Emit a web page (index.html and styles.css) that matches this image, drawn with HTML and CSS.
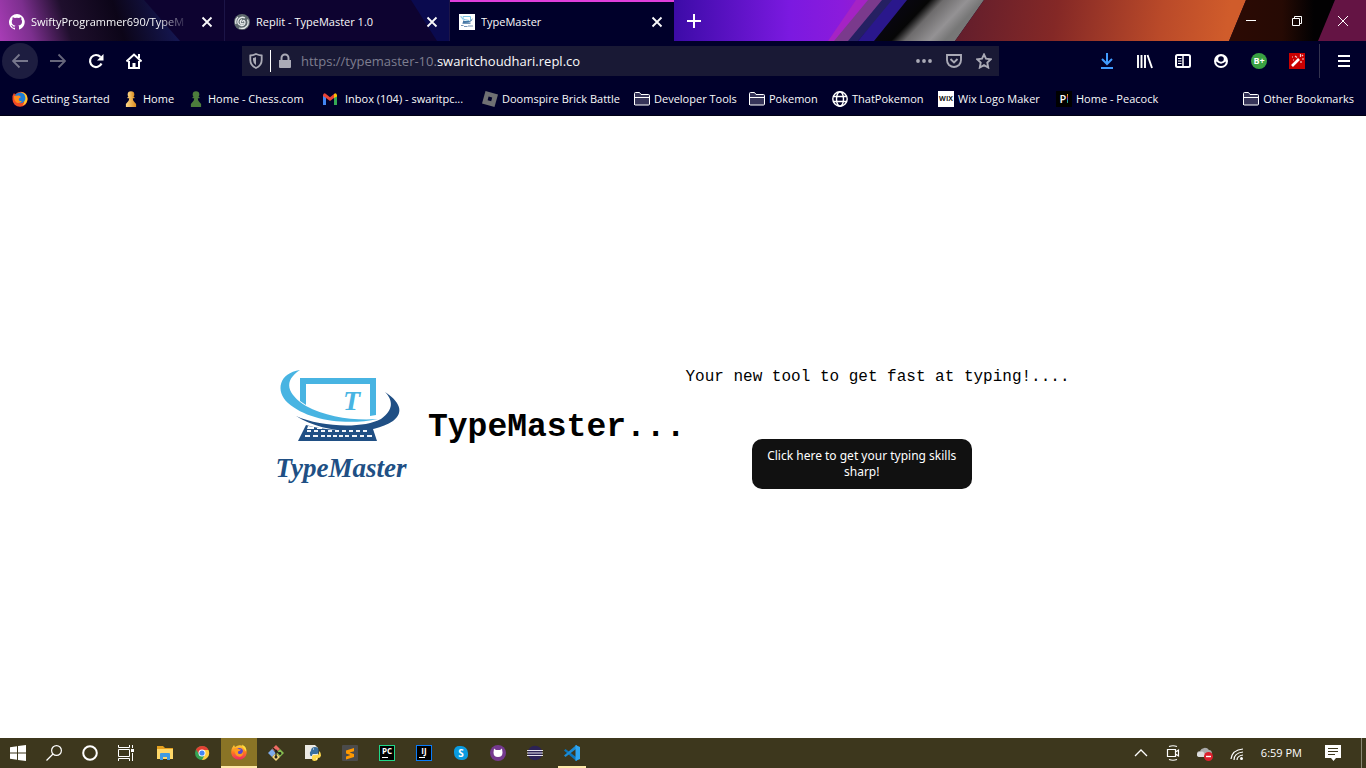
FILE: index.html
```html
<!DOCTYPE html>
<html lang="en">
<head>
<meta charset="utf-8">
<title>TypeMaster</title>
<link rel="stylesheet" href="styles.css">
</head>
<body>
<svg class="defs" aria-hidden="true">
  <defs>
    <linearGradient id="fire" x1="0" y1="0" x2="0" y2="1"><stop offset="0" stop-color="#ffd23a"/><stop offset=".5" stop-color="#ff7a1c"/><stop offset="1" stop-color="#f0246a"/></linearGradient>
    <linearGradient id="gold" x1="0" y1="0" x2="1" y2="0"><stop offset="0" stop-color="#ffd98a"/><stop offset="1" stop-color="#d98a1c"/></linearGradient>
  </defs>
  <symbol id="close" viewBox="0 0 16 16"><path d="M3.500 3.500l9 9m0-9l-9 9" fill="none" stroke="currentColor" stroke-width="1.800"/></symbol>
  <symbol id="folder" viewBox="0 0 16 16"><path d="M.5 14V2.500q0-1 1-1h4l1.500 2h7.500q1 0 1 1V13q0 1-1 1H1.500q-1 0-1-1z" fill="#363459" stroke="#fff"/><path d="M1 6.500h14.500" stroke="#fff"/></symbol>
  <symbol id="pawn" viewBox="0 0 16 16"><circle cx="8" cy="3.500" r="3.300"/><path d="M4.500 6h7v1.300H9.800c0 3 2 4 3.300 5.700V16H2.900v-3c1.300-1.700 3.300-2.700 3.300-5.700H4.500z"/></symbol>
  <symbol id="firefox" viewBox="0 0 16 16"><path d="M1 4l2-3 1 2q4-3 8-1l1 0q3 3 2.700 7a7.800 7.400 0 0 1-15.500 0Q0 6 1 4z" fill="url(#fire)"/><circle cx="8" cy="8" r="4.100" fill="#5a45cf"/><path d="M3 4.500q3-1.500 5 .7l2 .3q-.8 1.800-3 1.900-.5 2.500 2 2.700 2.800-.3 2.500-3.100 1.700 4-1.500 5.400Q3.500 14 3 4.500z" fill="#ff9b20"/><path d="M11 .5q.2 3 2.500 5l1.600 2Q16 3 11 .5z" fill="#ffdd3c"/></symbol>
  <symbol id="firefox-old" viewBox="0 0 16 16"><path d="M.5 5L2 2l1 1.500Q7-.8 12 1.500q4 2.500 3.500 7a7.500 7.300 0 0 1-15 0z" fill="#f04a24"/><path d="M9 1q6 .5 6.500 7-.5 5-5 6.500Q15 9 9 1z" fill="#ffca2c"/><path d="M4 3q4-3 8 0 2.500 4 .5 7-3 3.500-6.500 1.500Q1 8 4 3z" fill="#1f7fd8"/><path d="M2 5l5-.5L9 6 7 7.500q-1 3 3 2.500-2 3-5.500 1.500Q1.500 9 2 5z" fill="#ff8a1e"/></symbol>
</svg>

<header class="browser">
  <div class="tabstrip">
    <svg class="theme" viewBox="0 0 1366 41" preserveAspectRatio="none" aria-hidden="true">
      <defs>
        <linearGradient id="t1" gradientUnits="userSpaceOnUse" x1="0" y1="35" x2="160" y2="-15"><stop offset="0" stop-color="#a63cb4"/><stop offset=".18" stop-color="#7c2f8e"/><stop offset=".4" stop-color="#1f0f2d"/><stop offset=".7" stop-color="#0c0518"/><stop offset="1" stop-color="#14164f"/></linearGradient>
        <linearGradient id="t2"><stop offset="0" stop-color="#3c0ba7"/><stop offset=".55" stop-color="#7b19e0"/><stop offset=".8" stop-color="#8b1bdc"/><stop offset="1" stop-color="#9d1dc4"/></linearGradient>
        <linearGradient id="t3" gradientUnits="userSpaceOnUse" x1="965" y1="0" x2="1225" y2="41"><stop offset="0" stop-color="#641e2c"/><stop offset=".35" stop-color="#842826"/><stop offset=".75" stop-color="#ba4a29"/><stop offset="1" stop-color="#d05c2b"/></linearGradient>
        <linearGradient id="t4"><stop offset="0" stop-color="#2c0a04"/><stop offset=".5" stop-color="#260a04"/><stop offset=".8" stop-color="#020102"/></linearGradient>
        <linearGradient id="t5" gradientUnits="userSpaceOnUse" x1="907" y1="0" x2="947" y2="38"><stop offset="0" stop-color="#080610"/><stop offset=".3" stop-color="#060606"/><stop offset=".48" stop-color="#6d6b6c"/><stop offset=".8" stop-color="#949294"/><stop offset="1" stop-color="#777"/></linearGradient>
      </defs>
      <path d="M0 0h1366v41H0z" fill="#0d0330"/>
      <path d="M0 0h144l36 41H0z" fill="url(#t1)"/>
      <path d="M411 0h60v41h-34z" fill="#0a0a4e"/>
      <path d="M674 0h210l-36 41H674z" fill="url(#t2)"/>
      <path d="M856 0h14l-32 41h-10z" fill="#a523c4"/>
      <path d="M868 0h16l-34 41h-16z" fill="#7a3a8c"/>
      <path d="M882 0h12l-36 41h-10z" fill="#252062"/>
      <path d="M892 0h16l-33 41h-17z" fill="#2a178c"/>
      <path d="M907 0h77l-29 41h-81z" fill="url(#t5)"/>
      <path d="M984 0h262l-17 41H955z" fill="url(#t3)"/>
      <path d="M1246 0h89l-16 41h-90z" fill="url(#t4)"/>
      <path d="M1335 0h31v41h-48z" fill="#641444"/>
    </svg>
    <div class="tab">
      <svg class="icon" viewBox="0 0 16 16"><path fill="#fff" d="M8 0a8 8 0 0 0-2.500 15.600c.4.100.5-.2.500-.4v-1.500c-2 .4-2.600-.5-2.800-1-.1-.3-.5-1-.8-1.200-.3-.2-.7-.5 0-.5.600 0 1 .6 1.200.8.700 1.200 1.900.9 2.300.7.100-.5.300-.9.500-1.100-1.800-.2-3.600-.9-3.600-4 0-.8.300-1.600.8-2.100-.1-.2-.4-1 .1-2.100 0 0 .7-.2 2.200.8a7.500 7.500 0 0 1 4 0c1.500-1 2.200-.8 2.200-.8.500 1.100.2 1.900.1 2.100.5.600.8 1.300.8 2.100 0 3.100-1.900 3.700-3.600 4 .3.200.6.700.6 1.500v2.200c0 .2.100.5.500.4A8 8 0 0 0 8 0z"/></svg>
      <span class="tab-title faded">SwiftyProgrammer690/TypeM</span>
      <button class="tab-close" aria-label="Close tab"><svg class="icon"><use href="#close"/></svg></button>
    </div>
    <div class="tab">
      <svg class="icon" viewBox="0 0 16 16"><circle cx="8" cy="8" r="8" fill="#5d686c"/><path d="M8 8q2-3 3 0 0 4-4 3.500-4.500-1.500-2.500-6Q7 2 11 4M2 10q-1-5 2-7M5 14q5 1.500 8-2 2-3 .5-6.500M9.500 9Q8 11 6.500 9q-1-2 1.500-3.500" fill="none" stroke="#e6eaeb" stroke-width="1.300"/></svg>
      <span class="tab-title">Replit - TypeMaster 1.0</span>
      <button class="tab-close" aria-label="Close tab"><svg class="icon"><use href="#close"/></svg></button>
    </div>
    <div class="tab active">
      <svg class="icon" viewBox="0 0 16 16"><path d="M0 0h16v16H0z" fill="#fff"/><path d="M4 5.500V2.500h7.500V6M2 2q-1 3 8 4.500" fill="none" stroke="#7cc3e4"/><path d="M4 6.500q8 2 9.500-2.500.5 5-9.500 4.500zM3.500 8.500h8v1.200h-8z" fill="#4576a4"/><path d="M2 11.500h2.500M5 12.500h3.500M9 12h5" stroke="#7793b5"/></svg>
      <span class="tab-title">TypeMaster</span>
      <button class="tab-close" aria-label="Close tab"><svg class="icon"><use href="#close"/></svg></button>
    </div>
    <button class="new-tab" aria-label="New tab"><svg class="icon" viewBox="0 0 16 16"><path d="M8 1v14M1 8h14" stroke="#fff" stroke-width="2"/></svg></button>
    <div class="window-buttons">
      <button aria-label="Minimize"><svg class="icon" viewBox="0 0 16 16"><path d="M3 7.500h10" stroke="#fff"/></svg></button>
      <button aria-label="Restore"><svg class="icon" viewBox="0 0 16 16"><path d="M3.500 5.500h7v7h-7zM5.500 5V3.500h7v7H11" fill="none" stroke="#fff"/></svg></button>
      <button aria-label="Close"><svg class="icon" viewBox="0 0 16 16"><path d="M3 3l10 10m0-10L3 13" stroke="#fff"/></svg></button>
    </div>
  </div>

  <nav class="toolbar" aria-label="Navigation">
    <button class="tool back" aria-label="Back"><svg class="icon" viewBox="0 0 16 16"><path d="M16 8H1M7.500 1.500L1 8l6.500 6.500" fill="none" stroke="currentColor" stroke-width="1.800"/></svg></button>
    <button class="tool dim" aria-label="Forward"><svg class="icon" viewBox="0 0 16 16"><path d="M0 8h15M8.500 1.500L15 8l-6.500 6.500" fill="none" stroke="currentColor" stroke-width="1.800"/></svg></button>
    <button class="tool" aria-label="Reload"><svg class="icon" viewBox="0 0 16 16"><path d="M13.500 10.500a6 6 0 1 1-1-6.500" fill="none" stroke="#fff" stroke-width="2.200"/><path d="M15.500 1v6.500H9z" fill="#fff"/></svg></button>
    <button class="tool" aria-label="Home"><svg class="icon" viewBox="0 0 16 16"><path d="M.5 8.500L8 1.500l7.500 7M3 8v7h10V8" fill="none" stroke="#fff" stroke-width="2"/><path d="M6.500 15v-5h3v5M12 1h2v4h-2z" fill="#fff"/></svg></button>
    <div class="urlbar">
      <svg class="icon" viewBox="0 0 16 16"><path d="M8 1q3 1.300 5.700 1.500V7q0 5.500-5.700 8Q2.300 12.500 2.300 7V2.500Q5 2.300 8 1z" fill="none" stroke="#aaaab6" stroke-width="1.800"/><path d="M8 4v8q-3-2-3-5V5q1 0 3-1z" fill="#aaaab6"/></svg>
      <span class="urlbar-line"></span>
      <svg class="icon" viewBox="0 0 16 16"><path d="M2 7h12v7q0 1-1 1H3q-1 0-1-1z" fill="#aaaab6"/><path d="M4.500 8V5a3.500 3.500 0 0 1 7 0v3" fill="none" stroke="#aaaab6" stroke-width="2"/></svg>
      <a class="address" href="#"><span class="muted">https://typemaster-10.</span>swaritchoudhari.repl.co</a>
      <div class="url-actions">
        <svg class="icon" viewBox="0 0 16 16"><g fill="#aaaab6"><circle cx="2" cy="8" r="1.900"/><circle cx="8" cy="8" r="1.900"/><circle cx="14" cy="8" r="1.900"/></g></svg>
        <svg class="icon" viewBox="0 0 16 16"><path d="M1 2h14v5q0 3-2 5-5 4-10 0-2-2-2-5zM4.500 6L8 9.500 11.500 6" fill="none" stroke="#aaaab6" stroke-width="1.900"/></svg>
        <svg class="icon" viewBox="0 0 16 16"><path d="M8 1.500l2 4.200 4.800.6-3.500 3.300.9 4.900L8 12.100l-4.200 2.400.9-4.900L1.200 6.300 6 5.700z" fill="none" stroke="#aaaab6" stroke-width="1.900"/></svg>
      </div>
    </div>
    <button class="tool" aria-label="Downloads"><svg class="icon" viewBox="0 0 16 16"><path d="M8 0v11M3 6l5 5 5-5M2 15h12" fill="none" stroke="#409cff" stroke-width="2"/></svg></button>
    <button class="tool" aria-label="Library"><svg class="icon" viewBox="0 0 16 16"><path d="M1 2v13M4.500 2v13M8 2v13M10.500 2L15 15" fill="none" stroke="#fff" stroke-width="1.900"/></svg></button>
    <button class="tool" aria-label="Sidebar"><svg class="icon" viewBox="0 0 16 16"><rect x="1" y="2" width="14" height="12" rx="1.500" fill="none" stroke="#fff" stroke-width="2"/><path d="M8 2v12" stroke="#fff" stroke-width="1.500"/><path d="M3 5.500h3.500M3 8h3.500M3 10.500h3.500" stroke="#fff"/></svg></button>
    <button class="tool" aria-label="Account"><svg class="icon" viewBox="0 0 16 16"><circle cx="8" cy="8" r="7" fill="#fff"/><circle cx="8" cy="6" r="2.800" fill="#00002a"/><path d="M3 8.500q5 3 10 0-.8 4.500-5 4.500t-5-4.500z" fill="#00002a"/><path d="M5.500 9q2.500 2 5 0" stroke="#fff" stroke-width="1.300" fill="none"/></svg></button>
    <button class="tool" aria-label="B+"><span class="grade">B+</span></button>
    <button class="tool" aria-label="Wand"><svg class="icon" viewBox="0 0 16 16"><path d="M0 0h16v16H0z" fill="#c90000"/><path d="M3 13l7-7" stroke="#fff" stroke-width="2.600"/><path d="M11.500 1v3M13 6h2M6 3l2 1.500M3 4h1M4 7h1M14 2l-1 1M12 8v2" stroke="#f5c6c6" stroke-width="1.200"/></svg></button>
    <span class="divider"></span>
    <button class="tool" aria-label="Menu"><svg class="icon" viewBox="0 0 16 16"><path d="M2 3h12M2 8h12M2 13h12" stroke="#fff" stroke-width="2"/></svg></button>
  </nav>

  <nav class="bookmarks" aria-label="Bookmarks">
    <a href="#"><svg class="icon"><use href="#firefox-old"/></svg>Getting Started</a>
    <a href="#"><svg class="icon" fill="url(#gold)"><use href="#pawn"/></svg>Home</a>
    <a href="#"><svg class="icon" fill="#4c7d3c"><use href="#pawn"/></svg>Home - Chess.com</a>
    <a href="#" class="mail"><svg class="icon" viewBox="0 0 16 16"><path d="M1 14V4l3 2v8z" fill="#4285f4"/><path d="M12 14V6l3-2v10z" fill="#34a853"/><path d="M1 4q1-3 3-1l4 3.300L12 3v4L8 10 4 7 1 5z" fill="#ea4335"/><path d="M12 3q2-2 3 1v1.500L12 7z" fill="#fbbc04"/></svg>Inbox (104) - swaritpc...</a>
    <a href="#"><svg class="icon" viewBox="0 0 16 16"><path d="M3.500 0L16 3.500 12.500 16 0 12.500z" fill="#6f7073"/><path d="M6.600 5.600l3.600 1-1 3.600-3.600-1z" fill="#00002a"/></svg>Doomspire Brick Battle</a>
    <a href="#"><svg class="icon"><use href="#folder"/></svg>Developer Tools</a>
    <a href="#"><svg class="icon"><use href="#folder"/></svg>Pokemon</a>
    <a href="#"><svg class="icon" viewBox="0 0 16 16"><g fill="none" stroke="#fff" stroke-width="1.400"><circle cx="8" cy="8" r="7.200"/><ellipse cx="8" cy="8" rx="3.500" ry="7.200"/><path d="M1 5.500h14M1 10.500h14"/></g></svg>ThatPokemon</a>
    <a href="#"><span class="wix">WIX</span>Wix Logo Maker</a>
    <a href="#"><span class="peacock">P<i></i></span>Home - Peacock</a>
    <a href="#" class="other"><svg class="icon"><use href="#folder"/></svg>Other Bookmarks</a>
  </nav>
</header>

<main class="page">
  <svg class="logo" viewBox="0 0 150 140" role="img" aria-label="TypeMaster logo">
    <path d="M35 20h76v37l-6 1V26H41v21l-6-4z" fill="#48b4e2"/>
    <path d="M35 12C14 15 10 33 23 45C42 62 80 68 113 61C90 63 61 59 41 48C22 36 18 23 35 12z" fill="#48b4e2"/>
    <path d="M120 34C134 43 140 54 128 63C103 79 58 75 31 58C55 69 98 71 116 61C129 52 128 42 120 34z" fill="#204f84"/>
    <path d="M41 67q30 9 63 1h3l5 15H33z" fill="#204f84"/>
    <path d="M42 73h4m3 0h4m3 0h4m3 0h4m3 0h4m3 0h4m3 0h4m3 0h4m3 0h4M40 78h5m3 0h5m3 0h4m2 0h4m2 0h4m2 0h4m2 0h4m3 0h5m3 0h4m3 0h5" stroke="#f2f5f9" stroke-width="2"/>
    <path d="M43 68l6 1v2h-7zM52 70h5v1h-5z" fill="#fff"/>
    <text x="78" y="52" class="monogram">T</text>
    <text x="76" y="119" class="wordmark">TypeMaster</text>
  </svg>
  <h1>TypeMaster...</h1>
  <section class="intro">
    <p>Your new tool to get fast at typing!....</p>
    <button class="start">Click here to get your typing skills sharp!</button>
  </section>
</main>

<footer class="taskbar">
  <div class="system">
    <button aria-label="Start"><svg class="icon" viewBox="0 0 16 16"><path d="M0 2.300l7-1v6.200H0zM8 1.100L16 0v7.500H8zM0 8.500h7v6.200l-7-1zM8 8.500h8V16l-8-1.100z" fill="#fff"/></svg></button>
    <button aria-label="Search"><svg class="icon" viewBox="0 0 16 16"><circle cx="10.500" cy="5.500" r="4.900" fill="none" stroke="#fff" stroke-width="1.200"/><path d="M7 9L.5 15.500" stroke="#fff" stroke-width="1.300"/></svg></button>
    <button aria-label="Cortana"><svg class="icon" viewBox="0 0 16 16"><circle cx="8" cy="8" r="6.800" fill="none" stroke="#fff" stroke-width="2"/></svg></button>
    <button aria-label="Task view"><svg class="icon" viewBox="0 0 16 16"><path d="M.5 0v2.500h11V0M.5 16v-2.500h11V16M.5 4.500h11v7H.5zM14.500 0v3M14.500 8v8" fill="none" stroke="#fff"/><path d="M13 4h3v3h-3z" fill="#fff"/></svg></button>
  </div>
  <div class="apps">
    <button aria-label="File Explorer"><svg class="icon" viewBox="0 0 16 16"><path d="M0 1h6l2 2h8v11H0z" fill="#e4a01f"/><path d="M0 4h16v10H0z" fill="#ffd869"/><path d="M3 15V9q0-1 1-1h8q1 0 1 1v6h-3v-3H6v3z" fill="#3f9be2"/></svg></button>
    <button aria-label="Chrome"><svg class="icon" viewBox="0 0 16 16"><circle cx="8" cy="8" r="7" fill="#35a353"/><path d="M2 4.500A7 7 0 0 1 14.500 5H8L5 9z" fill="#e34133"/><path d="M14.500 5A7 7 0 0 1 8 15l3.200-6L8 5z" fill="#ffcd40"/><circle cx="8" cy="8" r="3.500" fill="#fff"/><circle cx="8" cy="8" r="2.600" fill="#4285f4"/></svg></button>
    <button class="current" aria-label="Firefox"><svg class="icon"><use href="#firefox"/></svg></button>
    <button aria-label="Git"><svg class="icon" viewBox="0 0 16 16"><path d="M8 0l4 4-4 4-4-4z" fill="#ef6b63"/><path d="M4 4l4 4-4 4-4-4z" fill="#7eaae9"/><path d="M12 4l4 4-4 4-4-4z" fill="#86bd50"/><path d="M8 8l4 4-4 4-4-4z" fill="#f5d67a"/><path d="M5 3l3 3v7M8 6l4 3" stroke="#26231a" stroke-width="1.300" fill="none"/><g fill="#26231a"><circle cx="8" cy="6" r="1.500"/><circle cx="8" cy="12" r="1.500"/><circle cx="12" cy="8.500" r="1.400"/></g></svg></button>
    <button aria-label="Python"><svg class="icon" viewBox="0 0 16 16"><path d="M0 0h10l3 3v11H0z" fill="#eceae4"/><path d="M6 6q0-4 4-4 3.500 0 3.500 3v2q0 2-2 2H8q-1 0-1 2H5.500Q4 7 6 6z" fill="#396f9e"/><path d="M14 6q2 1 2 4.500-.5 2.500-3 2.500v1q-1 2-3.500 2T7 14v-2q0-2 2-2h3q2 0 2-2z" fill="#ffd94d"/><path d="M8 4h1M11 14h1" stroke="#fff"/></svg></button>
    <button aria-label="Sublime Text"><svg class="icon" viewBox="0 0 16 16"><rect width="16" height="16" rx="1" fill="#4b4b4b"/><path d="M12 3v3.200L7.500 7.600 12 9v3l-8 2.500v-3L8.500 10 4 8.600v-3z" fill="#ff9900"/></svg></button>
    <button aria-label="PyCharm"><span class="jet">PC</span></button>
    <button aria-label="IntelliJ"><span class="jet blue">IJ</span></button>
    <button aria-label="Skype"><span class="skype">S</span></button>
    <button aria-label="GitHub Desktop"><svg class="icon" viewBox="0 0 16 16"><circle cx="8" cy="8" r="8" fill="#75398f"/><path d="M4 3.500L6 5h4l2-1.500.5 4q0 4.500-4.500 4.500T3.500 7.500z" fill="#fff"/></svg></button>
    <button aria-label="Eclipse"><svg class="icon" viewBox="0 0 16 16"><circle cx="8" cy="8" r="7.300" fill="#2c2255"/><path d="M0 5.500h16M0 8h16M0 10.500h16" stroke="#e6e3ee" stroke-width="1.100"/></svg></button>
    <button class="open" aria-label="Visual Studio Code"><svg class="icon" viewBox="0 0 16 16"><path d="M0 5.500L1.500 4 13 12.700V16L12 15.800z" fill="#0a75bd"/><path d="M0 10.500L1.500 12 13 3.300V0L12 .2z" fill="#1b8bd4"/><path d="M11.500 0L16 2v12l-4.500 2z" fill="#2fa5ef"/></svg></button>
  </div>
  <div class="tray">
    <button aria-label="Hidden icons"><svg class="icon" viewBox="0 0 16 16"><path d="M2 11l6-6 6 6" fill="none" stroke="#fff" stroke-width="1.300"/></svg></button>
    <button aria-label="Meet now"><svg class="icon" viewBox="0 0 16 16"><path d="M2.500 4.500h8v7h-8zM10.500 7l3-2v6l-3-2M4 1.500q4-1.500 8 0M4 14.500q4 1.500 8 0" fill="none" stroke="#fff" stroke-width="1.200"/></svg></button>
    <button aria-label="OneDrive"><svg class="icon" viewBox="0 0 16 16"><path d="M3 12a3 3 0 0 1 0-6 5 4.500 0 0 1 9-1q3 0 3 4v3z" fill="#aaa"/><path d="M2 12a2.500 2.500 0 0 1 1-5q4-2 6 5z" fill="#ddd"/><circle cx="11.500" cy="11.500" r="4.500" fill="#dc1f2c"/><path d="M9 11.500h5" stroke="#fff" stroke-width="1.400"/></svg></button>
    <button aria-label="Network"><svg class="icon" viewBox="0 0 16 16"><path d="M2 14Q3 5 14 4M5 15q0-7 9-8M8 15q0-4 6-5" fill="none" stroke="#fff" stroke-width="1.200"/><circle cx="12.500" cy="13.500" r="1.500" fill="#fff"/></svg></button>
    <time>6:59 PM</time>
    <button class="notice" aria-label="Notifications"><svg class="icon" viewBox="0 0 16 16"><path d="M0 0h16v13h-5l-2.500 3L6 13H0z" fill="#fff"/><path d="M3 3.500h10M3 6.500h10M3 9.500h7" stroke="#3d371d" stroke-width="1.100"/></svg></button>
  </div>
</footer>
</body>
</html>
```
FILE: styles.css
```css
* { box-sizing: border-box; }

body {
  margin: 0;
  min-height: 100vh;
  display: flex;
  flex-direction: column;
  background: #fff;
  font: 11px/16px "Open Sans", "Noto Sans", sans-serif;
}

button {
  padding: 0;
  border: 0;
  background: none;
  color: inherit;
  font: inherit;
  display: flex;
  align-items: center;
  justify-content: center;
}

a { color: inherit; text-decoration: none; }

.defs { position: absolute; width: 0; height: 0; }
.icon { width: 16px; height: 16px; flex: none; display: block; }

.browser { background: #00002a; color: #f9f9fa; }

/* Tabs */
.tabstrip { position: relative; display: flex; height: 41px; }
.theme { position: absolute; inset: 0; width: 100%; height: 100%; }

.tab {
  position: relative;
  width: 225px;
  display: flex;
  align-items: center;
  gap: 6px;
  padding: 2px 9px 0;
  border-right: 1px solid #1c1547;
}
.tab.active {
  width: 224px;
  background: #00002a;
  border-right: 0;
  border-top: 2px solid #df3fdc;
  padding-top: 0;
}
.tab-title { flex: 1; overflow: hidden; white-space: nowrap; }
.faded { mask-image: linear-gradient(to right, #000 80%, transparent); }
.tab-close { margin-left: 4px; }
.new-tab { position: relative; width: 40px; }

.window-buttons { position: relative; display: flex; margin-left: auto; }
.window-buttons button { width: 46px; }

/* Toolbar */
.toolbar {
  height: 41px;
  display: flex;
  align-items: center;
  gap: 2px;
  padding: 0 4px 2px 2px;
}
.tool { width: 36px; height: 36px; border-radius: 50%; }
.back { background: #1d1d40; color: #77778c; }
.dim { color: #66667b; }

.urlbar {
  flex: 1;
  height: 30px;
  margin: 0 88px;
  padding: 0 7px 0 6px;
  display: flex;
  align-items: center;
  gap: 6px;
  background: #191935;
  font-size: 13px;
}
.urlbar-line { width: 1px; height: 22px; background: #fff; }
.address { flex: 1; margin-left: 2px; white-space: nowrap; }
.muted { color: #7e7e90; }
.url-actions { display: flex; gap: 14px; }
.divider { width: 1px; height: 34px; background: #33334f; margin: 0 4px 0 2px; }

.grade {
  width: 16px;
  height: 16px;
  border-radius: 50%;
  background: #39a142;
  color: #fff;
  font-size: 9px;
  font-weight: 700;
}

/* Bookmarks */
.bookmarks {
  height: 34px;
  padding: 0 12px;
  display: grid;
  grid-template-columns: 111px 65px 134px 160px 152px 115px 83px 106px 118px 1fr auto;
  align-items: center;
  border-bottom: 1px solid #000014;
  white-space: nowrap;
}
.bookmarks a { display: flex; align-items: center; gap: 4px; }
.bookmarks .mail { gap: 7px; }

.wix, .peacock { width: 16px; height: 16px; text-align: center; }
.wix { background: #fff; color: #111; font-size: 7px; font-weight: 700; }
.peacock {
  background: #000;
  display: flex;
  justify-content: center;
  align-items: center;
  gap: 1px;
  font-weight: 600;
}
.peacock i {
  width: 1px;
  height: 9px;
  background: linear-gradient(#e8c321, #e3512f, #7d3ab8, #1ba2c8, #38ad52);
}

/* Page */
.page {
  flex: 1;
  display: flex;
  align-items: center;
  padding: 2px 296px 0 265px;
  color: #000;
  font-family: "Liberation Mono", monospace;
}
.logo { width: 150px; height: 140px; flex: none; }
.monogram {
  fill: #48b4e2;
  font: italic 700 28px "Liberation Serif", serif;
}
.wordmark {
  fill: #204f84;
  text-anchor: middle;
  font: italic 700 27px "Liberation Serif", serif;
}
h1 { margin: 0 0 0 13px; font-size: 33px; line-height: 40px; font-weight: 700; }
.intro {
  flex: 1;
  display: flex;
  flex-direction: column;
  gap: 53px;
}
.intro p { margin: 0; font-size: 16px; line-height: 18px; white-space: nowrap; }
.start {
  align-self: center;
  width: 220px;
  height: 50px;
  padding: 0 10px;
  margin-right: 32px;
  border-radius: 10px;
  background: #111;
  color: #fff;
  font: 12px/16px "Noto Sans", sans-serif;
}

/* Taskbar */
.taskbar {
  height: 30px;
  display: flex;
  background: #3d371d;
  color: #fff;
}
.system, .apps, .tray { display: flex; }
.system button, .apps button { width: 36px; height: 30px; }
.apps { gap: 1px; margin-left: 3px; }
.apps .current { background: #8a7426; border-bottom: 2px solid #fde9a8; }
.open { position: relative; }
.open::after {
  content: "";
  position: absolute;
  left: 4px;
  right: 4px;
  bottom: 0;
  height: 2px;
  background: #fde9a8;
}
.jet {
  width: 16px;
  height: 16px;
  border: 1px solid #21d789;
  background: linear-gradient(#fff, #fff) 2px 11px / 6px 1px no-repeat #000;
  font-size: 8px;
  line-height: 10px;
  font-weight: 700;
}
.blue { border-color: #087cfa; }
.skype {
  width: 14px;
  height: 14px;
  border-radius: 5px 7px 5px 7px;
  background: #0a9be0;
  font-size: 10px;
  line-height: 14px;
  font-weight: 700;
}
.tray {
  margin: 0 4px 0 auto;
  padding-right: 10px;
  align-items: center;
  border-right: 1px solid #8a8775;
}
.tray button { width: 32px; height: 30px; }
.tray time { margin: 0 13px 0 8px; }
.tray .notice { width: 36px; }
```
